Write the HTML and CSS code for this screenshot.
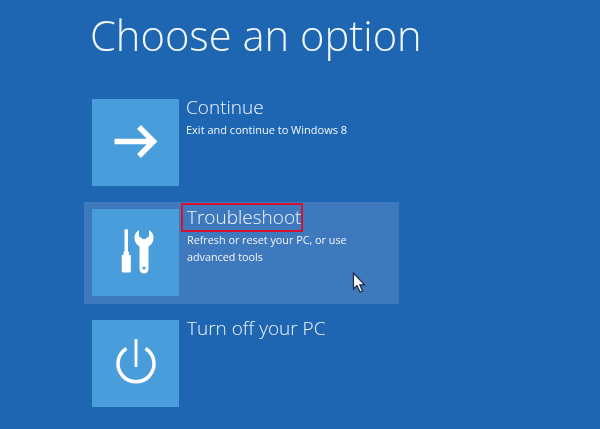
FILE: index.html
```html
<!DOCTYPE html>
<html lang="en">
<head>
<meta charset="utf-8">
<title>Choose an option</title>
<link rel="stylesheet" href="styles.css">
</head>
<body>
<main class="screen">
  <h1 class="heading">Choose an option</h1>
  <ul class="options">
    <li class="option option-first">
      <div class="tile">
        <svg class="icon icon-arrow" viewBox="0 0 48 48"><path d="M2.500 22.500H41M27 8L41.500 22.500L27 37" fill="none" stroke="#fff" stroke-width="5.500"/></svg>
      </div>
      <div class="copy">
        <h2 class="name">Continue</h2>
        <p class="desc">Exit and continue to Windows 8</p>
      </div>
    </li>
    <li class="option option-active">
      <div class="tile">
        <svg class="icon icon-tools" viewBox="0 0 48 48">
          <path d="M12.500 0.500C12.500 0 16 0 16 0.500V22L17 23.500V26H18.800V42A1.500 1.500 0 0 1 17.300 43.500H11.200A1.500 1.500 0 0 1 9.700 42V26H11.500V23.500L12.500 22Z" fill="#fff"/>
          <path d="M27 1V7.500L32 10.500L37 7.500V1C40 2.500 41.500 5.500 41.500 9C41.500 13 39.500 15.500 36.500 17.500V40A4.500 4.500 0 0 1 27.500 40V17.500C24.500 15.500 22.500 13 22.500 9C22.500 5.500 24 2.500 27 1Z" fill="#fff"/>
          <circle cx="32" cy="39" r="1.600" fill="#4a9ddb"/>
        </svg>
      </div>
      <div class="copy copy-shifted">
        <h2 class="name"><span class="marked">Troubleshoot</span></h2>
        <p class="desc desc-tight">Refresh or reset your PC, or use<br>advanced tools</p>
      </div>
      <svg class="cursor" viewBox="0 0 14 22"><path d="M1.500 1V17L5 13.500L8 20L10.500 19L7.800 12.800H12.500Z" fill="#fff" stroke="#1a2a40" stroke-width="1.200"/></svg>
    </li>
    <li class="option option-last">
      <div class="tile">
        <svg class="icon icon-power" viewBox="0 0 48 48"><path d="M14.500 9.500A18 18 0 1 0 33.500 9.500" fill="none" stroke="#fff" stroke-width="3.500"/><path d="M24 0V28" fill="none" stroke="#fff" stroke-width="2.800"/></svg>
      </div>
      <div class="copy copy-shifted">
        <h2 class="name">Turn off your PC</h2>
      </div>
    </li>
  </ul>
</main>
</body>
</html>
```
FILE: styles.css
```css
* { box-sizing: border-box; }
html, body { margin: 0; height: 100%; }
body {
  background: #1f66b2;
  color: #f2f7fc;
  font-family: "Open Sans", "Liberation Sans", sans-serif;
  overflow: hidden;
}
.screen { width: 600px; height: 429px; padding: 5px 0 0 84px; filter: blur(0.35px); }
.heading {
  margin: 0 0 27px 6px;
  font-size: 41.7px;
  line-height: 60px;
  font-weight: 300;
}
.options { list-style: none; margin: 0; padding: 0; width: 315px; }
.option { position: relative; display: flex; padding: 7px 8px; height: 102px; gap: 7px; }
.option-first { margin-bottom: 8px; }
.option-active { background: #3e78bd; margin-bottom: 9px; }
.tile {
  flex: none;
  width: 87px;
  height: 87px;
  background: #4a9ddb;
  display: flex;
  justify-content: center;
}
.icon { width: 48px; height: 48px; }
.icon-arrow { margin-top: 19.5px; }
.icon-tools { margin-top: 19.5px; }
.icon-power { margin-top: 19px; }
.copy { margin-top: -6px; }
.copy-shifted { margin-left: 1px; }
.name { margin: 0; font-size: 19px; line-height: 28px; font-weight: 300; }
.desc { margin: 0; font-size: 11px; line-height: 17px; font-weight: 400; }
.desc-tight { font-size: 10.8px; }
.marked {
  display: block;
  width: fit-content;
  margin: 2px 0 1px -4px;
  padding: 0 0 0 4px;
  line-height: 25px;
  outline: 2px solid #d8102c;
}
.cursor { position: absolute; left: 268px; top: 70px; width: 14px; height: 22px; }
```
